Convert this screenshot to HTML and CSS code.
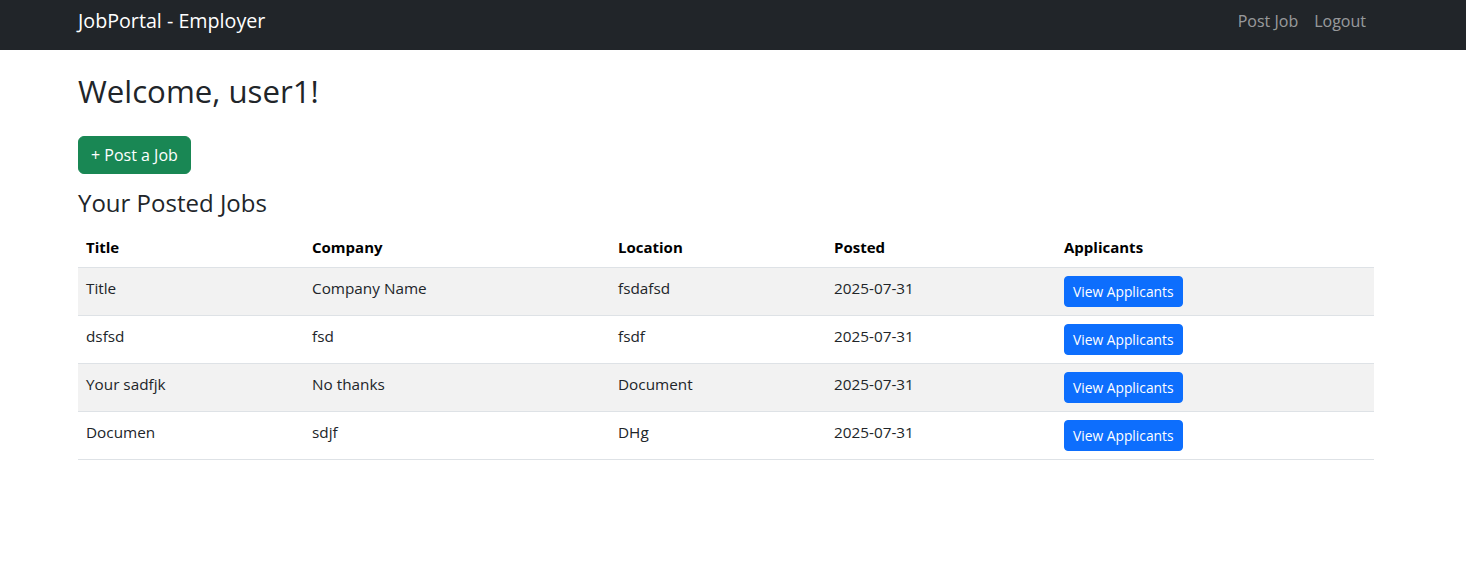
FILE: index.html
```html
<!DOCTYPE html>
<html lang="en">
<head>
<meta charset="utf-8">
<title>JobPortal - Employer</title>
<link rel="stylesheet" href="styles.css">
</head>
<body>
<nav class="navbar">
  <div class="nav-inner">
    <a class="brand" href="#">JobPortal - Employer</a>
    <ul class="nav-links">
      <li><a href="#">Post Job</a></li>
      <li><a href="#">Logout</a></li>
    </ul>
  </div>
</nav>
<main class="container">
  <h2 class="welcome">Welcome, user1!</h2>
  <a class="btn btn-success" href="#">+ Post a Job</a>
  <h4 class="section-title">Your Posted Jobs</h4>
  <table class="jobs">
    <colgroup>
      <col class="c-title"><col class="c-company"><col class="c-location"><col class="c-posted"><col class="c-app">
    </colgroup>
    <thead>
      <tr><th>Title</th><th>Company</th><th>Location</th><th>Posted</th><th>Applicants</th></tr>
    </thead>
    <tbody>
      <tr><td>Title</td><td>Company Name</td><td>fsdafsd</td><td>2025-07-31</td><td><a class="btn btn-sm btn-primary" href="#">View Applicants</a></td></tr>
      <tr><td>dsfsd</td><td>fsd</td><td>fsdf</td><td>2025-07-31</td><td><a class="btn btn-sm btn-primary" href="#">View Applicants</a></td></tr>
      <tr><td>Your sadfjk</td><td>No thanks</td><td>Document</td><td>2025-07-31</td><td><a class="btn btn-sm btn-primary" href="#">View Applicants</a></td></tr>
      <tr><td>Documen</td><td>sdjf</td><td>DHg</td><td>2025-07-31</td><td><a class="btn btn-sm btn-primary" href="#">View Applicants</a></td></tr>
    </tbody>
  </table>
</main>
</body>
</html>
```
FILE: styles.css
```css
* { box-sizing: border-box; }
body {
  margin: 0;
  font-family: "Open Sans", "Noto Sans", Arial, sans-serif;
  font-size: 16px;
  line-height: 1.5;
  color: #212529;
  background: #fff;
}
a { text-decoration: none; }

.navbar {
  background: #212529;
  height: 50px;
  padding-top: 6px;
}
.nav-inner {
  display: flex;
  align-items: center;
  justify-content: space-between;
  padding: 0 92px 0 78px;
  height: 30px;
}
.brand {
  color: #fff;
  font-size: 19.7px;
  line-height: 30px;
}
.nav-links {
  display: flex;
  list-style: none;
  margin: 0;
  padding: 0;
}
.nav-links a {
  display: block;
  padding: 0 8px;
  line-height: 24px;
  color: rgba(255, 255, 255, 0.55);
}

.container {
  padding: 0 92px 0 78px;
}
.welcome {
  margin: 22px 0 26px;
  font-size: 31.2px;
  font-weight: 500;
  line-height: 38px;
}
.btn {
  display: inline-block;
  color: #fff;
  border: 1px solid transparent;
  font-size: 16px;
  line-height: 24px;
  padding: 6px 12px;
  border-radius: 6px;
}
.btn-success { background: #198754; border-color: #198754; }
.btn-primary { background: #0d6efd; border-color: #0d6efd; }
.btn-sm {
  font-size: 13.8px;
  line-height: 21px;
  padding: 4px 8px;
  border-radius: 4px;
}
.section-title {
  margin: 14px 0 10px;
  font-size: 24px;
  font-weight: 500;
  line-height: 29px;
}
.jobs {
  width: 100%;
  border-collapse: collapse;
  vertical-align: top;
  font-size: 15.3px;
}
.c-title { width: 226px; }
.c-company { width: 306px; }
.c-location { width: 216px; }
.c-posted { width: 230px; }
.jobs th, .jobs td {
  padding: 8px;
  text-align: left;
  vertical-align: top;
  line-height: 24px;
  border-bottom: 1px solid #dee2e6;
}
.jobs th { font-weight: 700; color: #000; font-size: 15px; }
.jobs tbody tr:nth-child(odd) td { background: #f2f2f2; }
```
